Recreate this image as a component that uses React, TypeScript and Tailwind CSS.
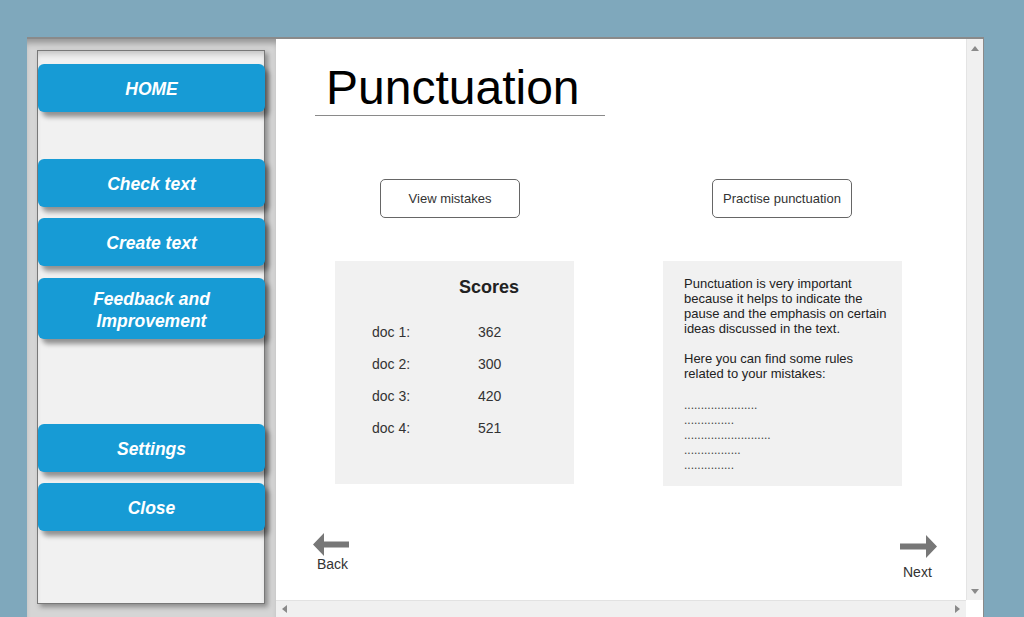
import React from 'react';

const navItems = [
  { label: 'HOME', cls: 'mt-[13px] h-[48px]' },
  { label: 'Check text', cls: 'mt-[47px] h-[48px]' },
  { label: 'Create text', cls: 'mt-[11px] h-[48px]' },
  { label: 'Feedback and\nImprovement', cls: 'mt-[12px] h-[61px]' },
  { label: 'Settings', cls: 'mt-[85px] h-[48px]' },
  { label: 'Close', cls: 'mt-[11px] h-[48px]' },
];

const scores = [
  ['doc 1:', '362'],
  ['doc 2:', '300'],
  ['doc 3:', '420'],
  ['doc 4:', '521'],
];

const dots = [22, 15, 26, 17, 15];

function Sidebar() {
  return (
    <div className="w-[249px] shrink-0 bg-[#d5d5d5] pl-[10px] pt-[11px] shadow-[inset_0_7px_6px_-3px_rgba(0,0,0,0.3)]">
      <div className="w-[228px] h-[554px] bg-[#f1f1f1] border border-[#787878] shadow-[3px_3px_5px_rgba(0,0,0,0.35),inset_0_6px_6px_-3px_rgba(0,0,0,0.2)] flex flex-col">
        {navItems.map((item) => (
          <button
            key={item.label}
            className={`${item.cls} w-[227px] shrink-0 pt-[2px] rounded-[6px] bg-[#179bd5] text-white font-bold italic text-[17.5px] leading-[22px] whitespace-pre-line shadow-[4px_5px_5px_rgba(0,0,0,0.4)]`}
          >
            {item.label}
          </button>
        ))}
      </div>
    </div>
  );
}

function ScoresPanel() {
  return (
    <div className="w-[239px] h-[223px] bg-[#f1f1f1] pt-[15px] text-[#333]">
      <div className="pl-[124px] text-[18px] font-bold leading-[22px] text-[#222]">Scores</div>
      <div className="mt-[26px] flex flex-col gap-[16px]">
        {scores.map(([doc, val]) => (
          <div key={doc} className="flex text-[14px] leading-[16px]">
            <span className="pl-[37px] w-[143px]">{doc}</span>
            <span>{val}</span>
          </div>
        ))}
      </div>
    </div>
  );
}

function InfoPanel() {
  return (
    <div className="w-[239px] h-[225px] bg-[#f1f1f1] pl-[21px] pt-[15px] text-[13px] leading-[15px] text-[#222] whitespace-nowrap">
      <p>
        Punctuation is very important
        <br />
        because it helps to indicate the
        <br />
        pause and the emphasis on certain
        <br />
        ideas discussed in the text.
      </p>
      <p className="mt-[15px]">
        Here you can find some rules
        <br />
        related to your mistakes:
      </p>
      <div className="mt-[17px] text-[12px] text-[#444]">
        {dots.map((n, i) => (
          <div key={i}>{'.'.repeat(n)}</div>
        ))}
      </div>
    </div>
  );
}

function ScrollTriangle({ dir }: { dir: 'up' | 'down' | 'left' | 'right' }) {
  const pts = {
    up: '0,5 4,0 8,5',
    down: '0,0 8,0 4,5',
    left: '5,0 5,8 0,4',
    right: '0,0 0,8 5,4',
  }[dir];
  const w = dir === 'up' || dir === 'down' ? 8 : 5;
  const h = dir === 'up' || dir === 'down' ? 5 : 8;
  return (
    <svg width={w} height={h} viewBox={`0 0 ${w} ${h}`}>
      <polygon points={pts} fill="#8a8a8a" />
    </svg>
  );
}

export default function App() {
  return (
    <div className="w-[1024px] h-[617px] bg-[#7fa8bc] pl-[27px] pt-[37px] overflow-hidden font-['Liberation_Sans',Arial,sans-serif]">
      <div className="w-[957px] h-[580px] border-t-2 border-r border-[#8a8a8a] flex">
        <Sidebar />

        <div className="flex-1 flex flex-col">
          <div className="flex-1 flex min-h-0">
            {/* main content */}
            <div className="w-[690px] bg-white flex flex-col">
              <div className="ml-[39px] w-[290px] border-b border-[#8a8a8a] pt-[25px] pb-[3px] pl-[11px]">
                <h1 className="text-[48px] leading-[48px] text-black font-normal">Punctuation</h1>
              </div>

              <div className="flex mt-[63px]">
                <div className="ml-[59px] w-[239px]">
                  <button className="ml-[45px] w-[140px] h-[39px] border border-[#666] rounded-[5px] bg-white text-[13px] text-[#333]">
                    View mistakes
                  </button>
                </div>
                <div className="ml-[89px] w-[239px]">
                  <button className="ml-[49px] w-[140px] h-[39px] border border-[#666] rounded-[5px] bg-white text-[13px] text-[#333]">
                    Practise punctuation
                  </button>
                </div>
              </div>

              <div className="flex mt-[43px] items-start">
                <div className="ml-[59px]">
                  <ScoresPanel />
                </div>
                <div className="ml-[89px]">
                  <InfoPanel />
                </div>
              </div>

              <div className="flex justify-between items-start mt-[47px] pl-[37px] pr-[28px]">
                <div className="flex flex-col items-start">
                  <svg width="37" height="24" viewBox="0 0 37 24">
                    <polygon points="0,11.5 11,0 11,8.5 36,8.5 36,14.5 11,14.5 11,23" fill="#777" />
                  </svg>
                  <span className="ml-[4px] mt-[-1px] text-[14px] leading-[16px] text-[#333]">Back</span>
                </div>
                <div className="flex flex-col items-start mt-[2px]">
                  <svg width="38" height="24" viewBox="0 0 38 24">
                    <polygon points="0,8.5 26,8.5 26,0 37,11.5 26,23 26,14.5 0,14.5" fill="#777" />
                  </svg>
                  <span className="ml-[3px] mt-[5px] text-[14px] leading-[16px] text-[#333]">Next</span>
                </div>
              </div>
            </div>

            {/* vertical scrollbar */}
            <div className="w-[17px] bg-[#f0f0f0] border-l border-[#e4e4e4] flex flex-col items-center justify-between pt-[7px] pb-[6px]">
              <ScrollTriangle dir="up" />
              <ScrollTriangle dir="down" />
            </div>
          </div>

          {/* horizontal scrollbar */}
          <div className="h-[17px] flex shrink-0">
            <div className="w-[690px] bg-[#f0f0f0] border-t border-[#e2e2e2] flex items-center justify-between pl-[6px] pr-[6px]">
              <ScrollTriangle dir="left" />
              <ScrollTriangle dir="right" />
            </div>
            <div className="w-[17px] bg-white" />
          </div>
        </div>
      </div>
    </div>
  );
}
